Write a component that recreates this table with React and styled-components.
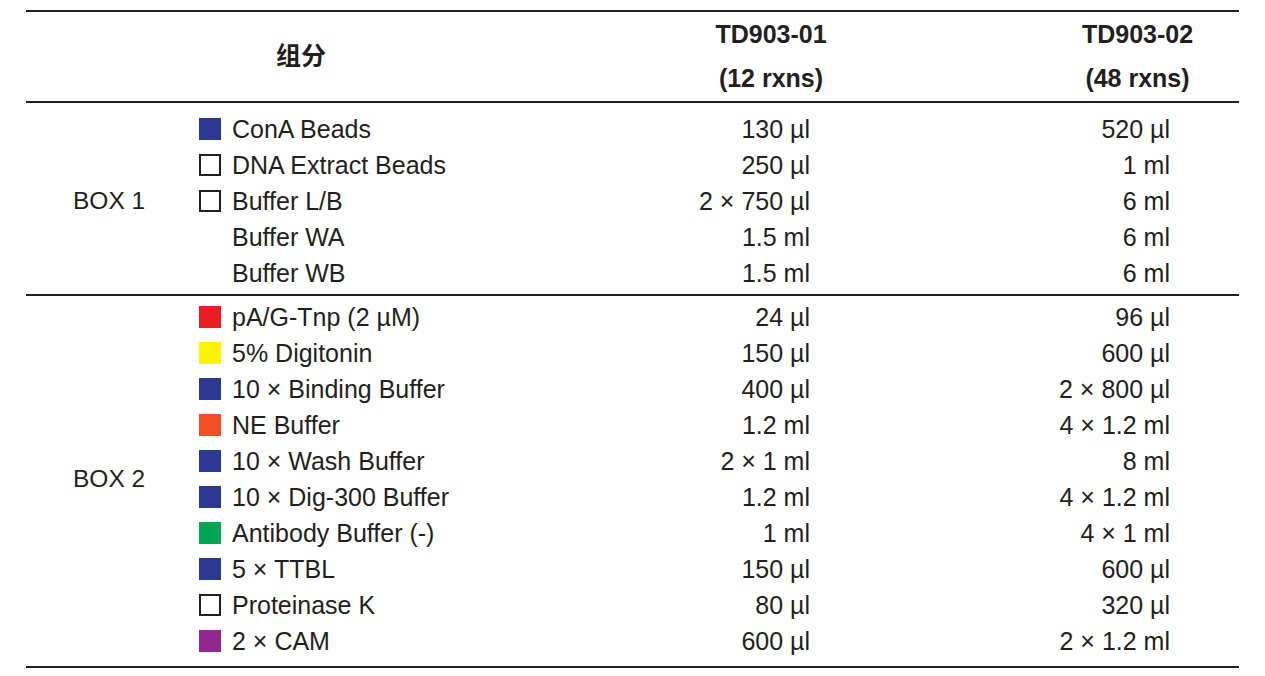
import React from 'react'
import styled, { createGlobalStyle } from 'styled-components'

const GlobalStyle = createGlobalStyle`
  html, body {
    margin: 0;
    padding: 0;
    background: #ffffff;
  }
  body {
    font-family: "Liberation Sans", Arial, "Noto Sans CJK SC", sans-serif;
    color: #231f20;
  }
`

const SWATCH = {
  blue: '#2b3990',
  red: '#ed1c24',
  yellow: '#fff200',
  orange: '#f04e23',
  green: '#00a651',
  purple: '#92278f',
}

const boxes = [
  {
    name: 'BOX 1',
    top: 8,
    bottom: 3,
    rows: [
      { swatch: 'blue', label: 'ConA Beads', a: '130 µl', b: '520 µl' },
      { swatch: 'empty', label: 'DNA Extract Beads', a: '250 µl', b: '1 ml' },
      { swatch: 'empty', label: 'Buffer L/B', a: '2 × 750 µl', b: '6 ml' },
      { swatch: null, label: 'Buffer WA', a: '1.5 ml', b: '6 ml' },
      { swatch: null, label: 'Buffer WB', a: '1.5 ml', b: '6 ml' },
    ],
  },
  {
    name: 'BOX 2',
    top: 3,
    bottom: 7,
    rows: [
      { swatch: 'red', label: 'pA/G-Tnp (2 µM)', a: '24 µl', b: '96 µl' },
      { swatch: 'yellow', label: '5% Digitonin', a: '150 µl', b: '600 µl' },
      { swatch: 'blue', label: '10 × Binding Buffer', a: '400 µl', b: '2 × 800 µl' },
      { swatch: 'orange', label: 'NE Buffer', a: '1.2 ml', b: '4 × 1.2 ml' },
      { swatch: 'blue', label: '10 × Wash Buffer', a: '2 × 1 ml', b: '8 ml' },
      { swatch: 'blue', label: '10 × Dig-300 Buffer', a: '1.2 ml', b: '4 × 1.2 ml' },
      { swatch: 'green', label: 'Antibody Buffer (-)', a: '1 ml', b: '4 × 1 ml' },
      { swatch: 'blue', label: '5 × TTBL', a: '150 µl', b: '600 µl' },
      { swatch: 'empty', label: 'Proteinase K', a: '80 µl', b: '320 µl' },
      { swatch: 'purple', label: '2 × CAM', a: '600 µl', b: '2 × 1.2 ml' },
    ],
  },
]

const App = () => {
  return (
    <>
      <GlobalStyle />
      <Page>
        <Table>
          <Header>
            <HeadCell>组分</HeadCell>
            <HeadCell>
              TD903-01
              <br />
              (12 rxns)
            </HeadCell>
            <HeadCell $shift={70}>
              TD903-02
              <br />
              (48 rxns)
            </HeadCell>
          </Header>
          {boxes.map((box) => (
            <Section key={box.name} $top={box.top} $bottom={box.bottom}>
              <BoxLabel>{box.name}</BoxLabel>
              <Rows>
                {box.rows.map((row) => (
                  <Row key={row.label}>
                    <Component>
                      <Swatch $kind={row.swatch} />
                      {row.label}
                    </Component>
                    <Amount>{row.a}</Amount>
                    <Amount>{row.b}</Amount>
                  </Row>
                ))}
              </Rows>
            </Section>
          ))}
        </Table>
      </Page>
    </>
  )
}

export default App

const Page = styled.div`
  width: 1265px;
  height: 676px;
  padding: 10px 26px 0 26px;
  box-sizing: border-box;
  background: #ffffff;
`

const Table = styled.div`
  width: 1213px;
  border-top: 2px solid #231f20;
  border-bottom: 2px solid #231f20;
`

const Header = styled.div`
  display: grid;
  grid-template-columns: 550px 390px 1fr;
  align-items: center;
  height: 89px;
  border-bottom: 2px solid #231f20;
  font-weight: bold;
  font-size: 25px;
  line-height: 44px;
`

const HeadCell = styled.div`
  text-align: center;
  padding-left: ${(p) => p.$shift || 0}px;
  margin-top: -2px;
`

const Section = styled.div`
  display: flex;
  padding: ${(p) => p.$top}px 0 ${(p) => p.$bottom}px 0;

  & + & {
    border-top: 2px solid #231f20;
  }
`

const BoxLabel = styled.div`
  width: 173px;
  flex: none;
  display: flex;
  align-items: center;
  padding-left: 47px;
  box-sizing: border-box;
  font-size: 24.5px;
`

const Rows = styled.div`
  flex: 1;
  display: flex;
  flex-direction: column;
`

const Row = styled.div`
  display: grid;
  grid-template-columns: 451px 160px 360px;
  align-items: center;
  height: 36px;
  font-size: 25px;
`

const Component = styled.div`
  display: flex;
  align-items: center;
  gap: 11px;
  white-space: nowrap;
`

const Swatch = styled.span`
  width: 22px;
  height: 22px;
  flex: none;
  box-sizing: border-box;
  background: ${(p) => SWATCH[p.$kind] || 'transparent'};
  border: ${(p) => (p.$kind === 'empty' ? '2px solid #231f20' : 'none')};
`

const Amount = styled.div`
  text-align: right;
  white-space: nowrap;
`
